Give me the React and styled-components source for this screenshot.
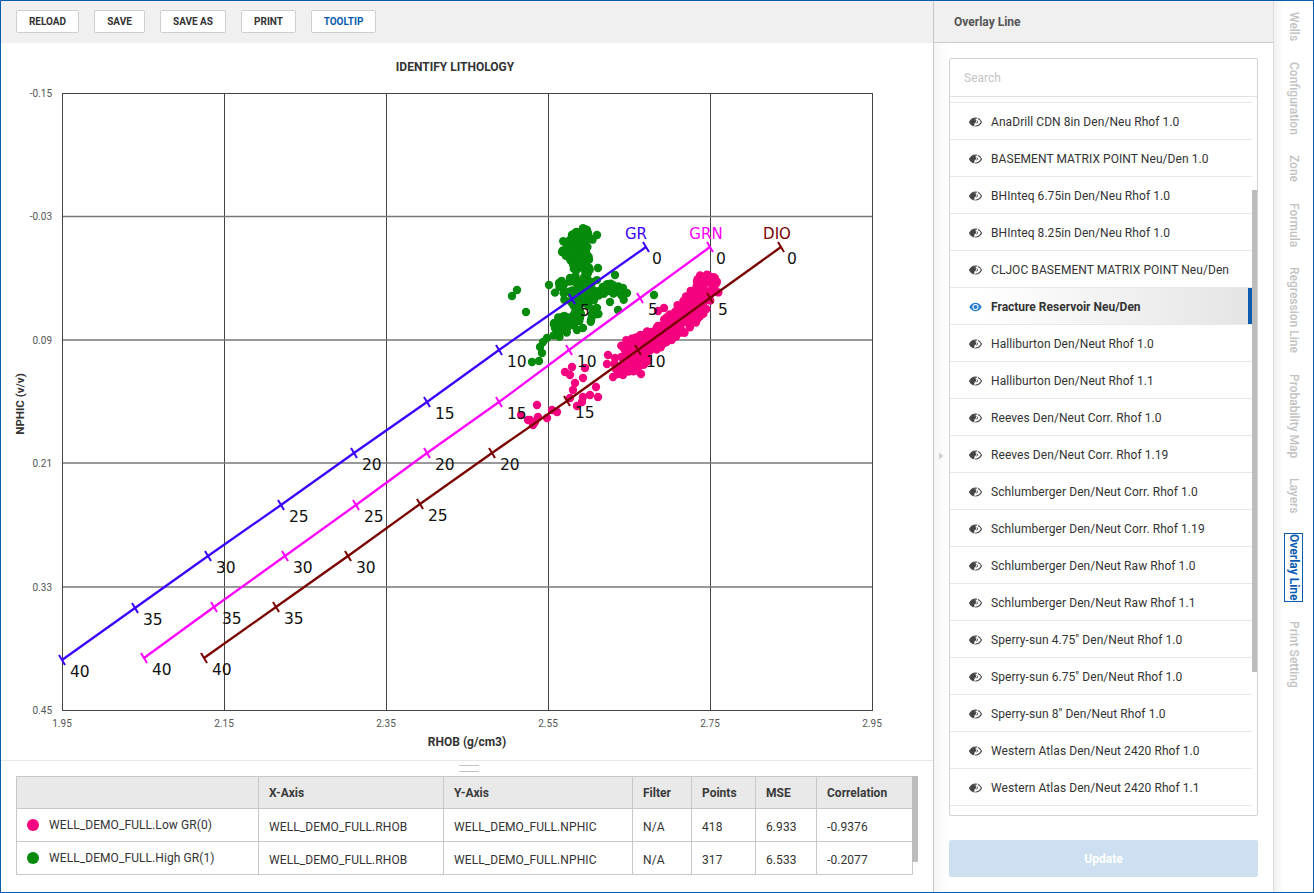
import React from "react";
import styled, { createGlobalStyle } from "styled-components";

const Global = createGlobalStyle`
  html, body { margin: 0; padding: 0; height: 893px; overflow: hidden; background: #fff; }
  #root { height: 893px; }
  * { box-sizing: border-box; }
`;

const Frame = styled.div`
  width: 1314px; height: 893px; display: flex; position: relative;
  border: 1px solid #0a5cb0;
  font-family: Roboto, "Liberation Sans", sans-serif; color: #333; background: #fff;
  overflow: hidden;
`;
const Main = styled.div`
  width: 932px; flex: none; display: flex; flex-direction: column;
`;
const Toolbar = styled.div`
  height: 42px; flex: none; background: #f0f0f0; display: flex; align-items: flex-start;
  padding: 9px 0 0 15px; gap: 15px;
`;
const ToolButton = styled.button`
  height: 23px; padding: 0; width: ${p => p.$w}px; background: #fff; border: 1px solid #cfcfcf; border-radius: 2px;
  font: 700 10px Roboto, sans-serif; color: ${p => (p.$active ? "#0a5cb0" : "#333")};
`;
const ChartWrap = styled.div`
  height: 718px; flex: none; border-bottom: 1px solid #e8e8e8;
  svg { display: block; }
`;
const Grip = styled.div`
  height: 15px; flex: none; display: flex; flex-direction: column; align-items: center; padding: 4px 0 0 0; gap: 5px;
`;
const GripLine = styled.div` width: 20px; height: 1px; background: #c4c4c4; margin-left: 4px; `;
const TableArea = styled.div`
  margin-left: 15px; width: 903px; display: flex;
`;
const Table = styled.table`
  width: 897px; height: 99px; border-collapse: collapse; table-layout: fixed; flex: none;
  font: 400 12px Roboto, sans-serif; color: #333;
  th, td { border: 1px solid #c8c8c8; padding: 0 0 0 10px; text-align: left; }
  th { background: #e9e9e9; font-weight: 700; height: 32px; color: #3a3a3a; }
  td { height: 33px; padding-top: 4px; letter-spacing: 0.08px; }
`;
const TableBar = styled.div` width: 6px; height: 86px; background: #bdbdbd; flex: none; margin-left: -1px; `;
const LegendCell = styled.div` display: flex; align-items: center; gap: 10px; margin-top: -4px; `;
const Dot = styled.span` width: 12px; height: 12px; border-radius: 50%; background: ${p => p.$c}; flex: none; `;

const Panel = styled.div`
  width: 340px; flex: none; border-left: 1px solid #c8c8c8; display: flex; flex-direction: column; position: relative;
`;
const PanelHeader = styled.div`
  height: 42px; flex: none; background: #f0f0f0; border-bottom: 1px solid #cbcbcb;
  font: 700 12px Roboto, sans-serif; color: #555; padding: 0 0 0 20px; display: flex; align-items: center;
`;
const PanelBody = styled.div`
  flex: 1; display: flex; flex-direction: column; padding: 15px 15px 14px 15px;
  background: linear-gradient(90deg, #f6f6f6 0, #fff 15px);
`;
const ListBox = styled.div`
  height: 758px; flex: none; border: 1px solid #d2d2d2; border-radius: 2px; background: #fff; position: relative; overflow: hidden;
`;
const SearchRow = styled.div`
  height: 38px; border-bottom: 1px solid #e2e2e2; padding: 0 0 0 14px; display: flex; align-items: center;
  font: 400 12px Roboto, sans-serif; color: #c4c4c4;
`;
const Spacer = styled.div` height: 6px; width: 302px; border-bottom: 1px solid #e8e8e8; `;
const Item = styled.div`
  height: 37px; width: 302px; border-bottom: 1px solid #e8e8e8; display: flex; align-items: center; padding: 2px 0 0 19px; gap: 9px;
  font: ${p => (p.$on ? 700 : 400)} 12px Roboto, sans-serif; letter-spacing: ${p => (p.$on ? 0 : "0.07px")};
  color: #333; white-space: nowrap; position: relative;
  background: ${p => (p.$on ? "linear-gradient(90deg, #fff 10%, #e4e4e4 100%)" : "transparent")};
  ${p => p.$on && "&::after { content: ''; position: absolute; right: 0; top: 0; bottom: 0; width: 4px; background: #0a5cb0; }"}
`;
const ScrollThumb = styled.div`
  position: absolute; right: 0; top: 131px; width: 5px; height: 482px; background: #bdbdbd;
`;
const UpdateButton = styled.button`
  margin-top: 24px; height: 37px; flex: none; border: 0; border-radius: 2px; background: #cddff1; color: #fff; padding: 1px 0 0;
  font: 700 12px Roboto, sans-serif;
`;
const Handle = styled.div`
  position: absolute; left: 5px; top: 451px; width: 0; height: 0;
  border-left: 4px solid #d0d0d0; border-top: 4px solid transparent; border-bottom: 4px solid transparent;
`;
const TabStrip = styled.div`
  width: 40px; flex: none; border-left: 1px solid #dcdcdc; background: linear-gradient(90deg, #f1f1f1 0, #fff 10px);
  display: flex; flex-direction: column; align-items: center; padding: 11px 0 0 0; gap: 20.5px;
`;
const Tab = styled.div`
  writing-mode: vertical-rl; font: ${p => (p.$on ? 700 : 500)} 12px Roboto, sans-serif; white-space: nowrap;
  color: ${p => (p.$on ? "#0a5cb0" : "#c2c2c2")}; line-height: 17px; width: 17px;
  ${p => p.$on && "outline: 1px solid #0a5cb0;"}
`;

const Eye = ({ on }) => (
  <svg width="13" height="10" viewBox="0 0 13 10" style={{ flex: "none" }}>
    {on ? (
      <>
        <path d="M0.3 5C2 2 4 0.8 6.5 0.8S11 2 12.7 5C11 8 9 9.2 6.5 9.2S2 8 0.3 5Z" fill="#2a7fd0" />
        <circle cx="6.5" cy="5" r="3" fill="#fff" />
        <circle cx="6.5" cy="5" r="2" fill="#2a7fd0" />
      </>
    ) : (
      <>
        <path d="M0.5 5C2 2.2 4 1 6.5 1S11 2.2 12.5 5C11 7.8 9 9 6.5 9S2 7.8 0.5 5Z" fill="#fff" stroke="#444" strokeWidth="1.1" />
        <path d="M0.8 5C2 2.5 3.8 1.2 7 1.2L5 8.8C3.2 8.4 1.8 7 0.8 5Z" fill="#444" />
        <circle cx="7.2" cy="4.8" r="1.7" fill="#444" />
        <path d="M9 0.4L5.6 9.6" stroke="#fff" strokeWidth="0.9" />
      </>
    )}
  </svg>
);

/* ---- chart data ---- */
const mulberry = seed => () => {
  seed |= 0; seed = (seed + 0x6d2b79f5) | 0;
  let t = Math.imul(seed ^ (seed >>> 15), 1 | seed);
  t = (t + Math.imul(t ^ (t >>> 7), 61 | t)) ^ t;
  return ((t ^ (t >>> 14)) >>> 0) / 4294967296;
};
const rnd = mulberry(42);
const blob = (x1, y1, x2, y2, n, s) =>
  Array.from({ length: n }, () => {
    const k = rnd();
    const a = rnd() * Math.PI * 2, r = Math.sqrt(rnd()) * s;
    return [x1 + (x2 - x1) * k + Math.cos(a) * r, y1 + (y2 - y1) * k + Math.sin(a) * r];
  });

const green = [
  [517, 290], [512, 296], [526, 312], [549, 285], [559, 283], [532, 362], [539, 361], [542, 353], [540, 347], [543, 342], [547, 338],
  [654, 295], [615, 275], [598, 268], [570, 278], [623, 288], [627, 293], [618, 310], [610, 302], [597, 308], [580, 318], [568, 322],
  [555, 328], [555, 335], [583, 328], [577, 330], [597, 235], [587, 230], [562, 252],
  ...blob(586, 237, 572, 245, 55, 10),
  ...blob(570, 248, 582, 264, 75, 11),
  ...blob(578, 270, 592, 276, 16, 8),
  ...blob(566, 292, 598, 290, 60, 13),
  ...blob(600, 285, 624, 292, 22, 8),
  ...blob(554, 332, 576, 314, 45, 9),
  ...blob(575, 298, 590, 318, 28, 11),
];
const pink = [
  [658, 311], [664, 308], [641, 374], [608, 355], [615, 358], [607, 364], [613, 377],
  [565, 372], [572, 367], [570, 375], [583, 378], [585, 368], [575, 383], [573, 390], [570, 398], [596, 387], [598, 397], [590, 395], [583, 397], [582, 402], [577, 406],
  [537, 405], [521, 415], [528, 420], [533, 425], [538, 417], [547, 418], [552, 410], [557, 412], [530, 420], [535, 422],
  ...blob(703, 285, 710, 287, 55, 12),
  ...blob(702, 296, 676, 326, 110, 13),
  ...blob(676, 324, 650, 342, 75, 11),
  ...blob(652, 338, 626, 348, 50, 9),
  ...blob(645, 352, 620, 370, 70, 10),
];

const series = [
  { name: "GR", c: "#3c00ff", nameAt: [636, 239], pts: [[646, 247], [572, 299], [499, 350], [427, 402], [354, 453], [281, 505], [208, 556], [135, 608], [62, 660]] },
  { name: "GRN", c: "#ff00ff", nameAt: [706, 239], pts: [[710, 247], [640, 298], [569, 350], [499, 402], [427, 453], [356, 505], [285, 556], [214, 607], [144, 658]] },
  { name: "DIO", c: "#7a0000", nameAt: [777, 239], pts: [[781, 247], [710, 298], [638, 350], [567, 401], [492, 453], [420, 504], [348, 556], [276, 607], [204, 658]] },
];
const labels = [0, 5, 10, 15, 20, 25, 30, 35, 40];
const xTicks = [[62, "1.95"], [224, "2.15"], [386, "2.35"], [548, "2.55"], [710, "2.75"], [872, "2.95"]];
const yTicks = [[93, "-0.15"], [216.5, "-0.03"], [340, "0.09"], [463, "0.21"], [587, "0.33"], [710, "0.45"]];

const Chart = () => (
  <svg width="932" height="717" viewBox="1 43 932 717" xmlns="http://www.w3.org/2000/svg">
    <text x="455" y="71" textAnchor="middle" fontFamily="Roboto" fontWeight="700" fontSize="12" fill="#333">IDENTIFY LITHOLOGY</text>
    {xTicks.slice(1, -1).map(([x]) => <line key={x} x1={x + 0.5} x2={x + 0.5} y1="93" y2="710" stroke="#444" />)}
    {yTicks.slice(1, -1).map(([y]) => <line key={y} x1="62" x2="872" y1={y} y2={y} stroke="#777" strokeWidth="1.3" />)}
    <rect x="62.5" y="93.5" width="810" height="617" fill="none" stroke="#444" />
    {xTicks.map(([x, t]) => <text key={t} x={x} y="727" textAnchor="middle" fontFamily="Roboto" fontSize="10" fill="#555">{t}</text>)}
    {yTicks.map(([y, t]) => <text key={t} x="52" y={y + 3.5} textAnchor="end" fontFamily="Roboto" fontSize="10" fill="#555">{t}</text>)}
    <text x="467" y="746" textAnchor="middle" fontFamily="Roboto" fontWeight="700" fontSize="12" fill="#333">RHOB (g/cm3)</text>
    <text transform="translate(24 404) rotate(-90)" textAnchor="middle" fontFamily="Roboto" fontWeight="700" fontSize="11.5" fill="#333">NPHIC (v/v)</text>
    {green.map(([x, y], i) => <circle key={"g" + i} cx={x} cy={y} r="4.2" fill="#068a0c" />)}
    {pink.map(([x, y], i) => <circle key={"p" + i} cx={x} cy={y} r="4.2" fill="#f5007f" />)}
    {series.map(s => (
      <g key={s.name}>
        <polyline points={s.pts.map(p => p.join(",")).join(" ")} fill="none" stroke={s.c} strokeWidth="2.3" />
        {s.pts.map(([x, y], i) => (
          <line key={i} x1={x - 3} y1={y - 5} x2={x + 3} y2={y + 5} stroke={s.c} strokeWidth="2" />
        ))}
        <text x={s.nameAt[0]} y={s.nameAt[1]} textAnchor="middle" fontFamily="DejaVu Sans" fontSize="15" fill={s.c}>{s.name}</text>
        {s.pts.map(([x, y], i) => (
          <text key={i} x={x + 6 + (i === 0 ? 0 : 2)} y={y + 17} fontFamily="DejaVu Sans" fontSize="15.5" fill="#111">{labels[i]}</text>
        ))}
      </g>
    ))}
  </svg>
);

const items = [
  "AnaDrill CDN 8in Den/Neu Rhof 1.0", "BASEMENT MATRIX POINT Neu/Den 1.0", "BHInteq 6.75in Den/Neu Rhof 1.0", "BHInteq 8.25in Den/Neu Rhof 1.0",
  "CLJOC BASEMENT MATRIX POINT Neu/Den", "Fracture Reservoir Neu/Den", "Halliburton Den/Neut Rhof 1.0", "Halliburton Den/Neut Rhof 1.1",
  "Reeves Den/Neut Corr. Rhof 1.0", "Reeves Den/Neut Corr. Rhof 1.19", "Schlumberger Den/Neut Corr. Rhof 1.0", "Schlumberger Den/Neut Corr. Rhof 1.19",
  "Schlumberger Den/Neut Raw Rhof 1.0", "Schlumberger Den/Neut Raw Rhof 1.1", 'Sperry-sun 4.75" Den/Neut Rhof 1.0', 'Sperry-sun 6.75" Den/Neut Rhof 1.0',
  'Sperry-sun 8" Den/Neut Rhof 1.0', "Western Atlas Den/Neut 2420 Rhof 1.0", "Western Atlas Den/Neut 2420 Rhof 1.1",
];
const tabs = ["Wells", "Configuration", "Zone", "Formula", "Regression Line", "Probability Map", "Layers", "Overlay Line", "Print Setting"];
const rows = [
  { c: "#f5007f", n: "WELL_DEMO_FULL.Low GR(0)", p: "418", m: "6.933", r: "-0.9376" },
  { c: "#068a0c", n: "WELL_DEMO_FULL.High GR(1)", p: "317", m: "6.533", r: "-0.2077" },
];

export default function App() {
  return (
    <Frame>
      <Global />
      <Main>
        <Toolbar>
          <ToolButton $w={63}>RELOAD</ToolButton>
          <ToolButton $w={51}>SAVE</ToolButton>
          <ToolButton $w={66}>SAVE AS</ToolButton>
          <ToolButton $w={55}>PRINT</ToolButton>
          <ToolButton $w={65} $active>TOOLTIP</ToolButton>
        </Toolbar>
        <ChartWrap><Chart /></ChartWrap>
        <Grip><GripLine /><GripLine /></Grip>
        <TableArea>
          <Table>
            <colgroup>
              <col style={{ width: 242 }} /><col style={{ width: 185 }} /><col style={{ width: 189 }} /><col style={{ width: 59 }} />
              <col style={{ width: 64 }} /><col style={{ width: 61 }} /><col />
            </colgroup>
            <thead>
              <tr><th /><th>X-Axis</th><th>Y-Axis</th><th>Filter</th><th>Points</th><th>MSE</th><th>Correlation</th></tr>
            </thead>
            <tbody>
              {rows.map(r => (
                <tr key={r.n}>
                  <td><LegendCell><Dot $c={r.c} />{r.n}</LegendCell></td>
                  <td>WELL_DEMO_FULL.RHOB</td><td>WELL_DEMO_FULL.NPHIC</td><td>N/A</td><td>{r.p}</td><td>{r.m}</td><td>{r.r}</td>
                </tr>
              ))}
            </tbody>
          </Table>
          <TableBar />
        </TableArea>
      </Main>
      <Panel>
        <PanelHeader>Overlay Line</PanelHeader>
        <PanelBody>
          <ListBox>
            <SearchRow>Search</SearchRow>
            <Spacer />
            {items.map(t => {
              const on = t === "Fracture Reservoir Neu/Den";
              return <Item key={t} $on={on}><Eye on={on} />{t}</Item>;
            })}
            <ScrollThumb />
          </ListBox>
          <UpdateButton>Update</UpdateButton>
        </PanelBody>
        <Handle />
      </Panel>
      <TabStrip>
        {tabs.map(t => <Tab key={t} $on={t === "Overlay Line"}>{t}</Tab>)}
      </TabStrip>
    </Frame>
  );
}
